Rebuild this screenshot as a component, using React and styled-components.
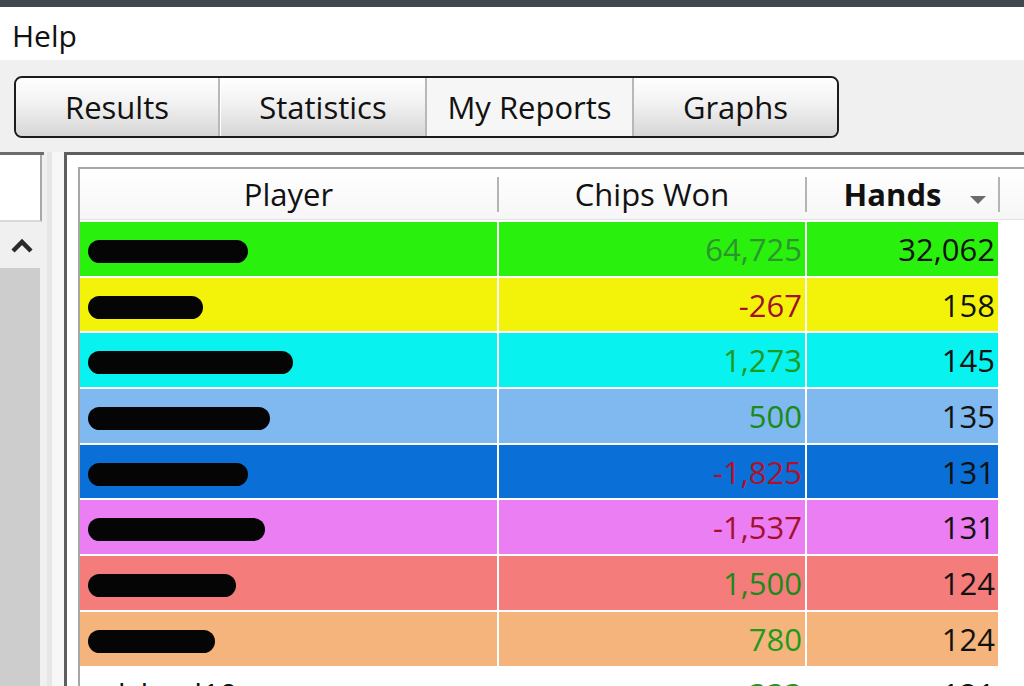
import React from 'react'
import styled, { createGlobalStyle } from 'styled-components'

const GlobalStyle = createGlobalStyle`
  html, body {
    margin: 0;
    padding: 0;
    height: 100%;
    overflow: hidden;
    background: #f0f0f0;
    font-family: 'Open Sans', 'Noto Sans', 'Liberation Sans', sans-serif;
  }
  #root {
    height: 100%;
  }
`

const Window = styled.div`
  display: flex;
  flex-direction: column;
  height: 100%;
`

const TitleStrip = styled.div`
  height: 7px;
  background: #3f494e;
  flex: none;
`

const MenuBar = styled.div`
  height: 53px;
  background: #ffffff;
  display: flex;
  align-items: center;
  padding: 3px 0 0 12px;
  box-sizing: border-box;
  font-size: 30px;
  color: #111;
  flex: none;
`

const TabArea = styled.div`
  padding: 16px 0 14px 14px;
  flex: none;
`

const TabBar = styled.div`
  display: inline-flex;
  height: 58px;
  border: 2px solid #1c1c1c;
  border-radius: 8px;
  overflow: hidden;
  background: #b8b8b8;
  gap: 2px;
`

const Tab = styled.div`
  width: ${p => p.w}px;
  display: flex;
  align-items: center;
  justify-content: center;
  font-size: 31px;
  color: #111;
  background: ${p => (p.active
    ? '#f6f6f6'
    : 'linear-gradient(to bottom, #ffffff 0%, #f1f1f1 45%, #d6d6d6 100%)')};
  border-left: ${p => (p.light ? '1px solid #ffffff' : 'none')};
`

const Content = styled.div`
  flex: 1;
  display: flex;
  min-height: 0;
`

const LeftPane = styled.div`
  width: 44px;
  display: flex;
  flex-direction: column;
  border-top: 3px solid #6c6c6c;
  flex: none;
`

const SearchBox = styled.div`
  height: 65px;
  background: #ffffff;
  border-right: 2px solid #a8a8a8;
  border-bottom: 2px solid #d8d8d8;
  margin-right: 2px;
`

const ScrollButton = styled.div`
  height: 46px;
  display: flex;
  align-items: center;
  padding: 2px 0 0 10px;
  box-sizing: border-box;
  background: #f0f0f0;
`

const ScrollThumb = styled.div`
  flex: 1;
  background: #cdcdcd;
  margin-right: 4px;
`

const Splitter = styled.div`
  width: 20px;
  flex: none;
  background: linear-gradient(to right, #f0f0f0 0px, #f0f0f0 3px, #e6e6e6 3px, #e6e6e6 8px, #f7f7f7 8px);
`

const MainPane = styled.div`
  flex: 1;
  background: #ffffff;
  border-left: 3px solid #5e5e5e;
  border-top: 3px solid #5e5e5e;
  padding: 12px 0 0 11px;
  min-width: 0;
  overflow: hidden;
`

const Grid = styled.div`
  border-left: 2px solid #a6a6a6;
  border-top: 2px solid #a6a6a6;
  height: 100%;
`

const cols = '417px 306px 191px'

const HeaderRow = styled.div`
  display: grid;
  grid-template-columns: ${cols} 1fr;
  column-gap: 2px;
  height: 50px;
  background: linear-gradient(to bottom, #ffffff, #f6f6f6);
  border-bottom: 1px solid #e4e0ea;
`

const HeaderCell = styled.div`
  position: relative;
  display: flex;
  align-items: center;
  justify-content: center;
  font-size: 31px;
  font-weight: ${p => (p.bold ? 700 : 400)};
  color: #111;
  &::after {
    content: '';
    display: ${p => (p.last ? 'none' : 'block')};
    position: absolute;
    right: -2px;
    top: 8px;
    bottom: 7px;
    width: 2px;
    background: #b4b4b4;
  }
`

const SortArrow = styled.span`
  position: absolute;
  right: 12px;
  top: 27px;
  width: 0;
  height: 0;
  border-left: 8px solid transparent;
  border-right: 8px solid transparent;
  border-top: 8px solid #6a6a6a;
`

const Row = styled.div`
  display: grid;
  grid-template-columns: ${cols};
  column-gap: 2px;
  height: 53.7px;
  margin-top: 2px;
`

const Cell = styled.div`
  background: ${p => p.bg};
  display: flex;
  align-items: center;
  justify-content: ${p => (p.right ? 'flex-end' : 'flex-start')};
  padding: ${p => (p.right ? '0 3px 0 0' : '0 0 0 8px')};
  font-size: 31px;
  color: ${p => p.color || '#111'};
  white-space: nowrap;
`

const Redacted = styled.span`
  display: block;
  height: 23px;
  margin-top: 5px;
  border-radius: 12px;
  background: #050505;
`

const PlainName = styled.span`
  color: #111;
`

const ChevronUp = () => (
  <svg width="24" height="16" viewBox="0 0 24 16">
    <path d="M3 13 L12 4 L21 13" fill="none" stroke="#2a2a2a" strokeWidth="4.5" />
  </svg>
)

const tabs = [
  { label: 'Results', w: 202 },
  { label: 'Statistics', w: 204, light: true },
  { label: 'My Reports', w: 205, active: true },
  { label: 'Graphs', w: 203 },
]

const GREEN = '#1f9a1f'
const RED = '#a3102c'

const rows = [
  { bg: '#2af00e', name: 160, chips: '64,725', chipsColor: '#2c962c', hands: '32,062' },
  { bg: '#f3f30a', name: 115, chips: '-267', chipsColor: RED, hands: '158' },
  { bg: '#08f3ef', name: 205, chips: '1,273', chipsColor: GREEN, hands: '145' },
  { bg: '#80b8f0', name: 182, chips: '500', chipsColor: '#1a8a1a', hands: '135' },
  { bg: '#0a70d8', name: 160, chips: '-1,825', chipsColor: '#b0102c', hands: '131' },
  { bg: '#ea7ef2', name: 177, chips: '-1,537', chipsColor: RED, hands: '131' },
  { bg: '#f47c7a', name: 148, chips: '1,500', chipsColor: '#1a8a1a', hands: '124' },
  { bg: '#f4b47c', name: 127, chips: '780', chipsColor: GREEN, hands: '124' },
]

const App = () => {
  return (
    <Window>
      <GlobalStyle />
      <TitleStrip />
      <MenuBar>Help</MenuBar>
      <TabArea>
        <TabBar>
          {tabs.map(t => (
            <Tab key={t.label} w={t.w} active={t.active} light={t.light}>
              {t.label}
            </Tab>
          ))}
        </TabBar>
      </TabArea>
      <Content>
        <LeftPane>
          <SearchBox />
          <ScrollButton>
            <ChevronUp />
          </ScrollButton>
          <ScrollThumb />
        </LeftPane>
        <Splitter />
        <MainPane>
          <Grid>
            <HeaderRow>
              <HeaderCell>Player</HeaderCell>
              <HeaderCell>Chips Won</HeaderCell>
              <HeaderCell bold>
                <span style={{ marginRight: 20 }}>Hands</span>
                <SortArrow />
              </HeaderCell>
              <HeaderCell last />
            </HeaderRow>
            {rows.map((r, i) => (
              <Row key={i}>
                <Cell bg={r.bg}>
                  <Redacted style={{ width: r.name }} />
                </Cell>
                <Cell bg={r.bg} right color={r.chipsColor}>{r.chips}</Cell>
                <Cell bg={r.bg} right>{r.hands}</Cell>
              </Row>
            ))}
            <Row>
              <Cell bg="#ffffff"><PlainName>odsheel10</PlainName></Cell>
              <Cell bg="#ffffff" right color={GREEN}>333</Cell>
              <Cell bg="#ffffff" right>121</Cell>
            </Row>
          </Grid>
        </MainPane>
      </Content>
    </Window>
  )
}

export default App
